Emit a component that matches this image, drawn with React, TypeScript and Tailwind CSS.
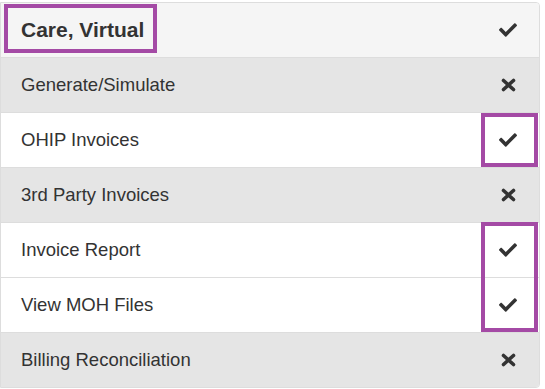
import React from "react";
import { FaCheck } from "react-icons/fa";

type Row = { label: string; ok: boolean; bg: string };

const rows: Row[] = [
  { label: "Generate/Simulate", ok: false, bg: "bg-[#e5e5e5]" },
  { label: "OHIP Invoices", ok: true, bg: "bg-white" },
  { label: "3rd Party Invoices", ok: false, bg: "bg-[#e5e5e5]" },
  { label: "Invoice Report", ok: true, bg: "bg-white" },
  { label: "View MOH Files", ok: true, bg: "bg-white" },
  { label: "Billing Reconciliation", ok: false, bg: "bg-[#e5e5e5]" },
];

function XIcon() {
  return (
    <svg width="15" height="14" viewBox="0 0 15 14" className="mr-[1px]">
      <path d="M2.5 2.5 L12.5 11.5 M12.5 2.5 L2.5 11.5" stroke="#333333" strokeWidth="3.6" strokeLinecap="round" fill="none" />
    </svg>
  );
}

export default function App() {
  return (
    <div className="relative w-[545px] h-[389px] bg-white pt-[2px]" style={{ fontFamily: '"Liberation Sans", Arial, sans-serif' }}>
      <div className="w-[540px] border border-[#dddddd] rounded-r-[4px] overflow-hidden text-[#333333]">
        <div className="h-[54px] flex items-center justify-between bg-[#f5f5f5] pl-[20px] pr-[22px]">
          <span className="text-[21px] font-bold">Care, Virtual</span>
          <FaCheck className="w-[18px] h-[18px] text-[#333333]" />
        </div>
        {rows.map((r) => (
          <div
            key={r.label}
            className={`h-[55px] flex items-center justify-between border-t border-[#dddddd] pl-[20px] pr-[22px] ${r.bg}`}
          >
            <span className="text-[18.5px]">{r.label}</span>
            {r.ok ? (
              <FaCheck className="w-[18px] h-[18px] text-[#333333]" />
            ) : (
              <XIcon />
            )}
          </div>
        ))}
      </div>
      <div className="absolute left-[4px] top-[4px] w-[153px] h-[49px] border-[4px] border-[#a44aa5]" />
      <div className="absolute left-[481px] top-[113px] w-[57px] h-[54px] border-[4px] border-[#a44aa5]" />
      <div className="absolute left-[481px] top-[222px] w-[57px] h-[110px] border-[4px] border-[#a44aa5]" />
    </div>
  );
}
